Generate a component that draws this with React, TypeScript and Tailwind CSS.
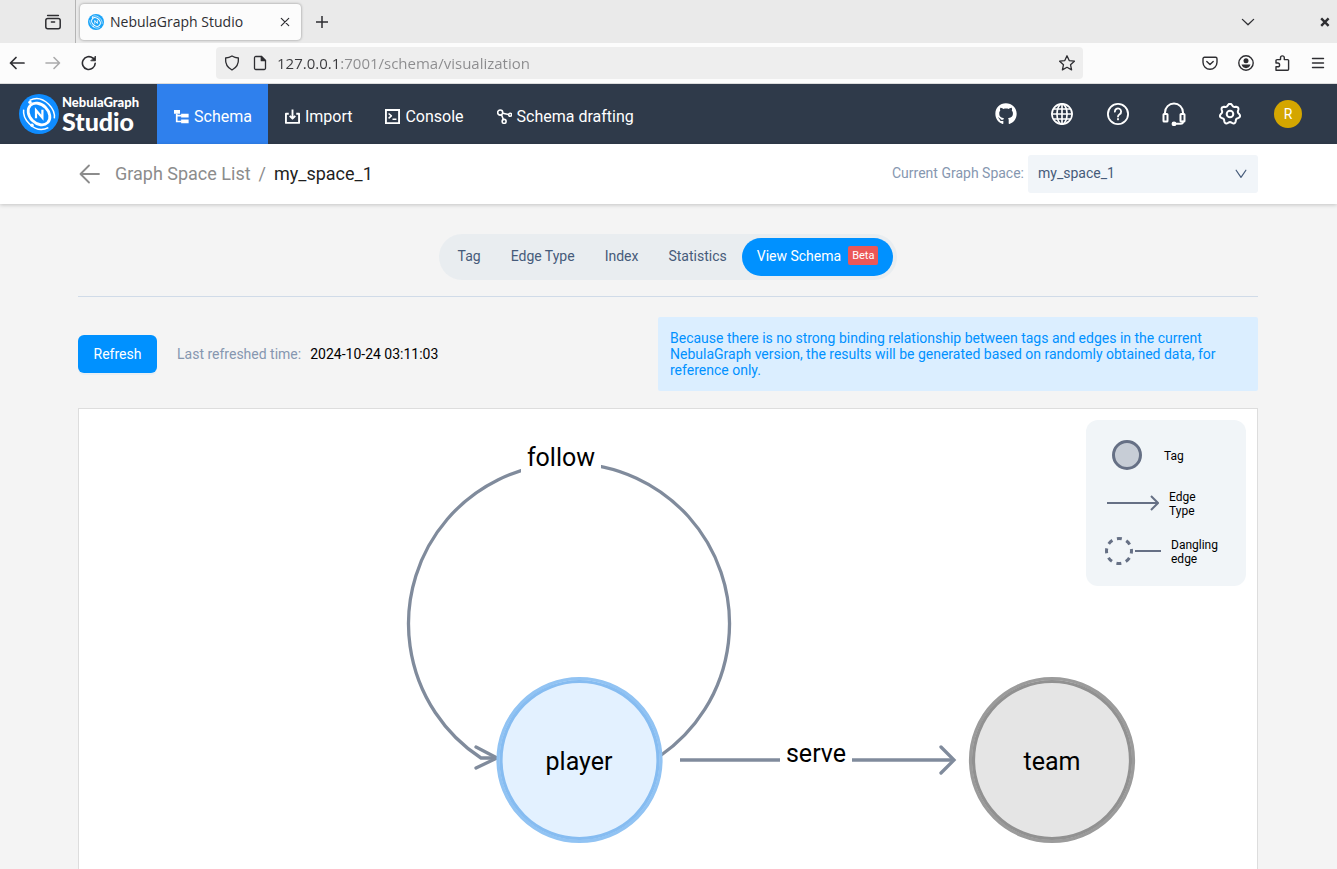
import type { ReactNode, SVGProps } from 'react';
import { FaGithub } from 'react-icons/fa';

type IconProps = SVGProps<SVGSVGElement>;

function Icon({ children, ...props }: IconProps) {
  return (
    <svg
      width="16"
      height="16"
      viewBox="0 0 16 16"
      fill="none"
      stroke="currentColor"
      strokeWidth="1.3"
      strokeLinecap="round"
      strokeLinejoin="round"
      aria-hidden="true"
      {...props}
    >
      {children}
    </svg>
  );
}

// Round mark: two tilted orbits around an N
function NebulaMark({ size, color = '#0f8cff' }: { size: number; color?: string }) {
  return (
    <svg width={size} height={size} viewBox="0 0 40 40" fill="none" className="shrink-0" aria-hidden="true">
      <circle cx="20" cy="20" r="20" fill={color} />
      <g transform="rotate(45 20 20)" stroke="#fff">
        <ellipse cx="20" cy="20" rx="12.2" ry="9.3" strokeWidth="2.8" />
        <path d="M3.8 17C6 10 12 6.3 20 6.3c6 0 11 2 14 6" strokeWidth="1.5" />
        <path d="M36.2 23C34 30 28 33.7 20 33.7c-6 0-11-2-14-6" strokeWidth="1.5" />
      </g>
      <circle cx="11" cy="8.2" r="1.7" fill="#fff" />
      <circle cx="13" cy="31.2" r="1.7" fill="#fff" />
      <path d="M17 24.2v-8l6.4 7.6v-8" stroke="#fff" strokeWidth="2.2" />
    </svg>
  );
}

// Gear outline with seven rounded teeth
const GEAR_PATH =
  Array.from({ length: 84 }, (_, i) => {
    const a = (i / 84) * Math.PI * 2;
    const r = 10 + 1.2 * Math.cos(7 * a);
    return `${i ? 'L' : 'M'}${(12 + r * Math.sin(a)).toFixed(2)} ${(12 - r * Math.cos(a)).toFixed(2)}`;
  }).join('') + 'Z';

const NAV_ITEMS: { label: string; icon: ReactNode; active?: boolean }[] = [
  {
    label: 'Schema',
    active: true,
    icon: (
      <g fill="currentColor" stroke="none">
        <path d="M0 1h6.400v4H0zM7.600 5h8v4h-8zM7.600 11.200h8v4h-8z" />
        <path d="M2 5h1.800v7.400H8v1.800H2zM2.600 6.200H8V8H2.600z" />
      </g>
    ),
  },
  {
    label: 'Import',
    icon: <path d="M4 5H1v9.800h14V5h-3M8 .6v9.400M5 7.300l3 3 3-3" strokeWidth="2" strokeLinecap="butt" />,
  },
  {
    label: 'Console',
    icon: (
      <>
        <path d="M1 1h14v14H1z" strokeWidth="2" strokeLinejoin="miter" />
        <path d="m3.800 4.800 3 2.600-3 2.600M8 11h4.200" strokeWidth="1.600" strokeLinecap="butt" />
      </>
    ),
  },
  {
    label: 'Schema drafting',
    icon: (
      <g strokeWidth="1.700">
        <circle cx="3.400" cy="3.800" r="2.700" />
        <circle cx="14" cy="6.200" r="1.600" />
        <circle cx="7.600" cy="13.200" r="2.100" />
        <path d="m6.200 4.600 6 1.200M4.800 6.200l2 5" />
      </g>
    ),
  },
];

const TABS = ['Tag', 'Edge Type', 'Index', 'Statistics'];

function BrowserChrome() {
  return (
    <div className="shrink-0 font-['Open_Sans','Noto_Sans',sans-serif] text-[#2e2e32]">
      {/* Tab strip */}
      <div className="flex h-[43px] items-center bg-[#eaeaea]">
        <div className="flex h-full w-19 items-center justify-end border-r border-[#b4b4b4] pr-3.5">
          <button aria-label="Recent tabs">
            <Icon strokeWidth="1.5">
              <rect x="0.8" y="4.4" width="14.4" height="10.4" rx="2" />
              <path d="M2.6 1.6h10.8M6.4 8h3.2" />
            </Icon>
          </button>
        </div>
        <div className="ml-1 flex h-9 w-[221px] items-center rounded bg-[#fcfcfc] px-2 shadow-[0_0_3px_rgba(0,0,0,0.4)]">
          <NebulaMark size={16} color="#1ba4f8" />
          <span className="ml-1.5 grow text-sm">NebulaGraph Studio</span>
          <button aria-label="Close tab">
            <Icon strokeWidth="1.200">
              <path d="m4.3 4.3 7.4 7.4M11.7 4.3l-7.4 7.4" />
            </Icon>
          </button>
        </div>
        <button aria-label="New tab" className="ml-[13px]">
          <Icon strokeWidth="1.5" strokeLinecap="butt">
            <path d="M8 2v12M2 8h12" />
          </Icon>
        </button>
        <button aria-label="List all tabs" className="mr-[61px] ml-auto">
          <Icon>
            <path d="m2.4 5.4 5.6 5.4 5.6-5.4" />
          </Icon>
        </button>
        <button aria-label="Close window" className="mr-1">
          <Icon strokeWidth="2.4" strokeLinecap="butt">
            <path d="m4.2 4.4 7.4 7.4M11.6 4.4l-7.4 7.4" />
          </Icon>
        </button>
      </div>

      {/* Toolbar */}
      <div className="flex h-[41px] items-center border-b border-[#dcdcdc] bg-[#fcfcfc] pr-[11px] pl-[9px]">
        <div className="flex w-[207px] items-center gap-5">
          <button aria-label="Back">
            <Icon strokeWidth="1.7">
              <path d="M15 8H1.5M7 2.5 1.5 8 7 13.5" />
            </Icon>
          </button>
          <button aria-label="Forward" className="text-[#ababac]" disabled>
            <Icon strokeWidth="1.6">
              <path d="M1 8h13.5M9 2.5 14.5 8 9 13.5" />
            </Icon>
          </button>
          <button aria-label="Reload">
            <Icon strokeWidth="1.6">
              <path d="M14.2 8.3A6.4 6.4 0 1 1 12 3.2l1.4 1.4" />
              <path d="M14.5 1.4v4.4h-4.4z" fill="currentColor" strokeWidth="0.8" />
            </Icon>
          </button>
        </div>
        <div className="flex h-8 grow items-center rounded bg-[#eeeeee] px-2">
          <Icon>
            <path d="M8 1c2 1.3 4 1.9 6.4 2 .4 5.300-1.600 9.600-6.400 12C3.200 12.600 1.200 8.300 1.600 3 4 2.900 6 2.300 8 1z" />
          </Icon>
          <Icon className="ml-3">
            <path d="M9.500 1.500H3.800a1.300 1.300 0 0 0-1.300 1.300v10.400a1.300 1.300 0 0 0 1.300 1.300h8.400a1.300 1.300 0 0 0 1.300-1.300V5.500z" />
            <path d="M9.300 1.500v4.200h4.200z" fill="currentColor" />
          </Icon>
          <input
            aria-label="Address"
            defaultValue="127.0.0.1:7001/schema/visualization"
            className="ml-[9px] grow bg-[linear-gradient(90deg,#3a3a3d_62px,#8b8b8d_62px)] bg-clip-text text-[15px] text-transparent outline-none"
          />
          <button aria-label="Bookmark this page">
            <Icon>
              <path d="m8 .8 2.200 4.800 5.200.6-3.900 3.500 1.100 5.200L8 12.300l-4.600 2.600 1.100-5.200L.6 6.200l5.200-.6z" />
            </Icon>
          </button>
        </div>
        <div className="ml-[119px] flex items-center gap-5">
          <button aria-label="Save to Pocket">
            <Icon strokeWidth="1.400">
              <path d="M2.500 2.200h11a1.500 1.500 0 0 1 1.500 1.500v3.600a7 7 0 0 1-14 0V3.700a1.500 1.500 0 0 1 1.500-1.500z" />
              <path d="m4.800 6.500 3.200 3 3.200-3" />
            </Icon>
          </button>
          <button aria-label="Account">
            <Icon strokeWidth="1.400">
              <circle cx="8" cy="8" r="7.200" />
              <circle cx="8" cy="5.800" r="2.500" fill="currentColor" stroke="none" />
              <path d="M3.500 9.600h9c-.6 2.200-2.400 3.600-4.500 3.600s-3.900-1.400-4.500-3.600z" fill="currentColor" stroke="none" />
            </Icon>
          </button>
          <button aria-label="Extensions">
            <Icon strokeWidth="1.400">
              <path d="M2 15.200h11.600c.6 0 1-.4 1-1V5.600c0-.6-.4-1-1-1H10.300V2.800a1.900 1.900 0 0 0-3.800 0v1.800H3c-.6 0-1 .4-1 1V8h1.700a1.900 1.900 0 0 1 0 3.800H2z" />
            </Icon>
          </button>
          <button aria-label="Open application menu">
            <Icon strokeWidth="1.400">
              <path d="M2.500 3.500h11M2.500 8h11M2.500 12.500h11" />
            </Icon>
          </button>
        </div>
      </div>
    </div>
  );
}

function AppHeader() {
  return (
    <header className="flex h-15 shrink-0 items-center bg-[#2f3a4a] pr-[35px] text-white">
      <a href="#home" className="flex w-[157px] items-center gap-[3px] pl-[19px]">
        <NebulaMark size={40} />
        <span className="flex flex-col font-['Lato',sans-serif] font-black">
          <span className="text-[13px] leading-[14px]">NebulaGraph</span>
          <span className="text-[25px] leading-6">Studio</span>
        </span>
      </a>
      <nav className="flex h-full">
        {NAV_ITEMS.map((item) => (
          <a
            key={item.label}
            href="#nav"
            className={`flex items-center gap-[5px] pt-[5px] pr-4 pl-[17px] text-base ${item.active ? 'bg-[#2f80ed]' : ''}`}
          >
            <Icon width="15" height="15">
              {item.icon}
            </Icon>
            {item.label}
          </a>
        ))}
      </nav>
      <div className="ml-auto flex items-center gap-[34px]">
        <a href="#github" aria-label="GitHub">
          <FaGithub size={22} />
        </a>
        <button aria-label="Language">
          <Icon width="22" height="22" viewBox="0 0 24 24" strokeWidth="1.800">
            <circle cx="12" cy="12" r="11" />
            <ellipse cx="12" cy="12" rx="5.500" ry="11" />
            <path d="M12 1v22M1 12h22M3 6.500h18M3 17.500h18" />
          </Icon>
        </button>
        <button aria-label="Help">
          <Icon width="22" height="22" viewBox="0 0 24 24" strokeWidth="2">
            <circle cx="12" cy="12" r="11" />
            <path d="M8.600 9.400a3.400 3.400 0 1 1 5.200 2.800c-1.200.8-1.800 1.300-1.800 2.500M12 17.300v.6" />
          </Icon>
        </button>
        <button aria-label="Support">
          <Icon width="24" height="24" viewBox="0 0 24 24" strokeWidth="2" className="-mx-px">
            <rect x="1.500" y="12" width="4" height="7.500" rx="0.600" />
            <rect x="18.500" y="12" width="4" height="7.500" rx="0.600" />
            <path d="M3 12V10.500a9 9 0 0 1 18 0V12M21 19.500c0 1.600-.8 2.300-2.300 2.300H13" />
            <circle cx="12" cy="21.800" r="1.400" fill="currentColor" />
          </Icon>
        </button>
        <button aria-label="Settings">
          <Icon width="22" height="22" viewBox="0 0 24 24" strokeWidth="2.200">
            <path d={GEAR_PATH} />
            <circle cx="12" cy="12" r="3.600" />
          </Icon>
        </button>
      </div>
      <button className="ml-[33px] flex size-7 items-center justify-center rounded-full bg-[#d4a600] text-sm">R</button>
    </header>
  );
}

function SpaceBar() {
  return (
    <div className="z-10 flex h-15 shrink-0 items-center bg-white pr-[79px] pl-[78px] shadow-[0_1px_4px_rgba(0,0,0,0.2)]">
      <a href="#spaces" className="flex items-center gap-[15px] text-lg text-[#8c8c8c]">
        <Icon width="22" height="22" viewBox="0 0 22 22" strokeWidth="1.800">
          <path d="M21 11H2.500M11 2.500 2.500 11l8.500 8.500" />
        </Icon>
        Graph Space List
      </a>
      <span className="mx-2 text-lg text-[#8c8c8c]">/</span>
      <span className="text-lg text-[#1f1f1f]">my_space_1</span>
      <label htmlFor="space" className="ml-auto pb-0.5 text-sm text-[#8697b0]">
        Current Graph Space:
      </label>
      <div className="relative ml-1">
        <select
          id="space"
          className="h-[38px] w-[230px] appearance-none rounded-[3px] bg-[#f1f5f9] px-2.5 pb-0.5 text-sm text-[#465b7a]"
        >
          <option>my_space_1</option>
        </select>
        <Icon width="12" height="12" className="pointer-events-none absolute top-[13px] right-[11px] text-[#465b7a]" strokeWidth="1.600">
          <path d="m1.500 3 6.500 9.500L14.500 3" />
        </Icon>
      </div>
    </div>
  );
}

function Legend() {
  return (
    <ul className="absolute top-[11px] right-[11px] flex w-40 flex-col rounded-xl bg-[#f1f5f8] py-5 text-xs leading-[14px] text-black">
      <li className="flex items-center gap-[22px] pl-[26px]">
        <svg width="30" height="30" aria-hidden="true">
          <circle cx="15" cy="15" r="13.500" fill="#c7cdd6" stroke="#667085" strokeWidth="3" />
        </svg>
        <span className="pt-0.5">Tag</span>
      </li>
      <li className="mt-[18px] flex items-center gap-2.5 pl-[21px]">
        <svg width="52" height="16" fill="none" stroke="#667085" strokeWidth="2" aria-hidden="true">
          <path d="M0 8h51M44 1l7 7-7 7" />
        </svg>
        <span className="w-10 pt-0.5">Edge Type</span>
      </li>
      <li className="mt-[18px] flex items-center gap-2.5 pl-[19px]">
        <svg width="56" height="28" fill="none" stroke="#667085" aria-hidden="true">
          <circle cx="14" cy="14" r="12.500" strokeWidth="3" strokeDasharray="5 4.817" strokeDashoffset="2.500" />
          <path d="M30 14h26" strokeWidth="2" />
        </svg>
        <span className="w-14 pt-0.5">Dangling edge</span>
      </li>
    </ul>
  );
}

function SchemaGraph() {
  return (
    <svg width="1178" height="460" className="font-['Roboto',sans-serif] text-[25px]" aria-label="Schema graph">
      {/* Edges */}
      <g fill="none" stroke="#808b9c" strokeWidth="3.300">
        <path d="M581 347a160.500 160.500 0 1 0-179 2h17" />
        <path d="M397 338l21 11-21 10" strokeLinecap="round" />
        <path d="M601 351h273" />
        <path d="M862 338l13 13-13 13" strokeLinecap="round" />
      </g>
      <rect x="442" y="32" width="80" height="36" fill="#fff" />
      <rect x="701" y="328" width="72" height="36" fill="#fff" />

      {/* Nodes */}
      <circle cx="500.500" cy="351" r="81.500" fill="#e3f1ff" stroke="#91c3f3" strokeWidth="3.200" />
      <circle cx="500.500" cy="351" r="78.500" fill="none" stroke="#86bcf1" strokeWidth="3.200" />
      <circle cx="973" cy="351" r="81.500" fill="#e5e5e5" stroke="#9b9b9b" strokeWidth="3.200" />
      <circle cx="973" cy="351" r="78.500" fill="none" stroke="#919191" strokeWidth="3.200" />

      <g fill="#000" textAnchor="middle">
        <text x="482" y="57">follow</text>
        <text x="737" y="353">serve</text>
        <text x="500" y="361">player</text>
        <text x="973" y="361">team</text>
      </g>
    </svg>
  );
}

export default function App() {
  return (
    <div className="flex h-screen flex-col overflow-hidden bg-[#f4f4f4] font-['Roboto',sans-serif]">
      <BrowserChrome />
      <AppHeader />
      <SpaceBar />
      <main className="flex min-h-0 grow flex-col pt-[30px] pr-[79px] pl-[78px]">
        <div className="flex justify-center border-b border-[#d0dbe8] pb-4">
          <div role="tablist" className="flex rounded-full bg-[#e9edf0] p-1 text-sm text-[#465b7a]">
            {TABS.map((tab) => (
              <button key={tab} role="tab" aria-selected="false" className="h-[38px] px-[15px] pb-0.5">
                {tab}
              </button>
            ))}
            <button
              role="tab"
              aria-selected="true"
              className="flex h-[38px] items-center gap-[7px] rounded-full bg-[#0091ff] px-[15px] pb-0.5 text-white"
            >
              View Schema
              <span className="mb-0.5 rounded-xs bg-[#eb5757] px-1 text-[11px] leading-[19px]">Beta</span>
            </button>
          </div>
        </div>

        <div className="mt-5 flex items-center">
          <button className="h-[38px] w-[79px] rounded-md bg-[#0091ff] text-sm text-white shadow-[0_2px_0_rgba(0,145,255,0.05)]">
            Refresh
          </button>
          <span className="ml-5 text-sm text-[#8697b0]">Last refreshed time:</span>
          <span className="ml-[9px] text-sm text-black">2024-10-24 03:11:03</span>
          <p className="ml-auto w-[600px] rounded-xs bg-[#dbeeff] px-3 py-[13px] text-sm leading-4 text-[#0091ff]">
            Because there is no strong binding relationship between tags and edges in the current NebulaGraph version,
            the results will be generated based on randomly obtained data, for reference only.
          </p>
        </div>

        {/* Graph canvas */}
        <div className="relative mt-[17px] min-h-0 grow overflow-hidden border border-b-0 border-[#dddddd] bg-white">
          <SchemaGraph />
          <Legend />
        </div>
      </main>
    </div>
  );
}
